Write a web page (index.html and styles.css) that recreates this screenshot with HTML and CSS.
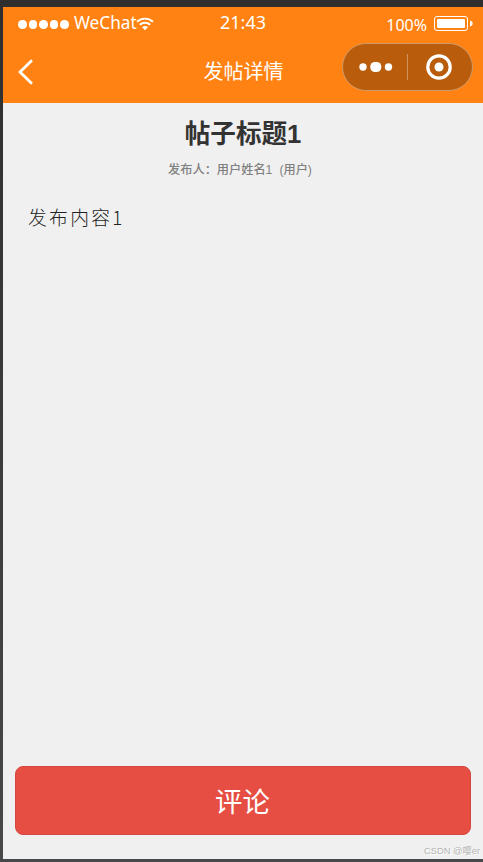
FILE: index.html
```html
<!DOCTYPE html>
<html lang="zh-CN">
<head>
    <meta charset="UTF-8">
    <meta name="viewport" content="width=device-width, initial-scale=1.0">
    <title>发帖详情</title>
    <link rel="stylesheet" href="styles.css">
</head>
<body>
    <div class="phone">
        <header class="header">
            <div class="status-bar">
                <div class="carrier">
                    <span class="signal"><i></i><i></i><i></i><i></i><i></i></span>
                    <span class="carrier-name">WeChat</span>
                    <svg class="wifi" viewBox="0 0 18 14" width="18" height="14">
                        <path d="M1 4.8C5.6.6 12.4.6 17 4.8M3.8 7.8c3-2.8 7.4-2.8 10.4 0" fill="none" stroke="#fff" stroke-width="1.9"/>
                        <path d="M6.1 10.2c1.7-1.6 4.1-1.6 5.8 0L9 13.2z" fill="#fff"/>
                    </svg>
                </div>
                <span class="time">21:43</span>
                <div class="power">
                    <span class="percent">100%</span>
                    <svg class="battery" viewBox="0 0 39 15" width="39" height="15">
                        <rect x=".5" y=".5" width="33" height="14" rx="2.5" fill="none" stroke="#fff"/>
                        <rect x="3" y="3" width="28" height="9" rx="1" fill="#fff"/>
                        <path d="M36 4.5c3.6.8 3.6 5.2 0 6z" fill="#fff"/>
                    </svg>
                </div>
            </div>
            <nav class="nav-bar">
                <svg class="back" viewBox="0 0 16 26" width="16" height="26">
                    <path d="M14 1.3L2 13l12 11.7" fill="none" stroke="#fff" stroke-width="2.8"/>
                </svg>
                <span class="nav-title">发帖详情</span>
                <div class="capsule">
                    <svg class="more" viewBox="0 0 34 12" width="34" height="12">
                        <circle cx="4" cy="6" r="3.7" fill="#fff"/>
                        <rect x="11.3" y="1" width="11" height="10" rx="4.6" fill="#fff"/>
                        <circle cx="29.5" cy="6" r="3.7" fill="#fff"/>
                    </svg>
                    <span class="divider"></span>
                    <svg class="close" viewBox="0 0 26 26" width="26" height="26">
                        <circle cx="13" cy="13" r="11.2" fill="none" stroke="#fff" stroke-width="3.2"/>
                        <circle cx="13" cy="13" r="4.5" fill="#fff"/>
                    </svg>
                </div>
            </nav>
        </header>
        <main class="post">
            <h1 class="post-title">帖子标题1</h1>
            <p class="post-author">发布人：用户姓名1<span class="role">(用户)</span></p>
            <p class="post-content">发布内容1</p>
        </main>
        <footer class="footer">
            <button class="comment-btn">评论</button>
            <span class="watermark">CSDN @嘤er</span>
        </footer>
    </div>
</body>
</html>
```
FILE: styles.css
```css
* {
    box-sizing: border-box;
}
body {
    margin: 0;
    height: 862px;
    padding: 7px 0 3px 3px;
    background: linear-gradient(#2e2e2e, #464849);
    font-family: "Liberation Sans", "Noto Sans CJK SC", sans-serif;
    overflow: hidden;
}
.phone {
    display: flex;
    flex-direction: column;
    height: 852px;
    background: #f0f0f0;
}
.header {
    height: 96px;
    background: #ff8212;
    color: #fff;
}
.status-bar {
    display: grid;
    grid-template-columns: 1fr auto 1fr;
    height: 34px;
    padding: 0 10px 0 15px;
    font-family: "Noto Sans", sans-serif;
    font-size: 17.5px;
    line-height: 31px;
}
.carrier,
.power {
    display: flex;
    align-items: flex-start;
}
.signal {
    display: flex;
    gap: 2px;
    margin: 13px 5px 0 0;
}
.signal i {
    width: 8.6px;
    height: 8.6px;
    border-radius: 50%;
    background: #fff;
}
.carrier-name {
    font-size: 17.2px;
}
.wifi {
    margin: 10px 0 0 -1px;
}
.time {
    padding-right: 5px;
    line-height: 30px;
    font-size: 18px;
}
.power {
    justify-content: flex-end;
}
.percent {
    margin-right: 7px;
    padding-top: 3px;
    font-size: 16px;
}
.battery {
    margin-top: 9px;
}
.nav-bar {
    display: grid;
    grid-template-columns: 1fr auto 1fr;
    padding: 0 10px 0 14px;
    height: 62px;
}
.back {
    margin: 18px 0 0 1px;
}
.nav-title {
    padding-right: 3px;
    font-family: "Noto Sans CJK SC", sans-serif;
    font-size: 20px;
    line-height: 60px;
}
.capsule {
    display: flex;
    align-items: center;
    justify-self: end;
    width: 131px;
    height: 48px;
    margin-top: 2px;
    padding-left: 16px;
    border: 1px solid #d19a69;
    border-radius: 24px;
    background: #b95d0c;
}
.divider {
    width: 1px;
    height: 26px;
    margin: 0 18px 0 14px;
    background: #d0935f;
}
.post {
    flex: 1;
    padding: 11px 25px 0;
}
.post-title {
    margin: 0;
    color: #333;
    font-size: 25.6px;
    line-height: 40px;
    text-align: center;
}
.post-author {
    margin: 5px 0 0;
    padding-right: 6px;
    color: #808080;
    font-size: 12.2px;
    font-weight: 500;
    line-height: 22px;
    text-align: center;
}
.role {
    margin-left: 7px;
}
.post-content {
    margin: 20px 0 0;
    color: #222;
    font-family: "Noto Sans CJK SC", sans-serif;
    font-size: 18.8px;
    font-weight: 300;
    letter-spacing: 2.3px;
    line-height: 32px;
}
.footer {
    position: relative;
    padding: 0 12px 24px;
}
.comment-btn {
    display: block;
    width: 100%;
    height: 69px;
    padding: 0 1px 2px 0;
    border: 1px solid #d4463f;
    border-radius: 8px;
    background: #e64d43;
    color: #fff;
    font-family: "Noto Sans CJK SC", sans-serif;
    font-size: 27.4px;
}
.watermark {
    position: absolute;
    right: 3px;
    bottom: 1px;
    color: #b4b4b4;
    font-size: 9.3px;
    line-height: 14px;
    text-shadow: 1px 1px 0 #fff;
}
```
